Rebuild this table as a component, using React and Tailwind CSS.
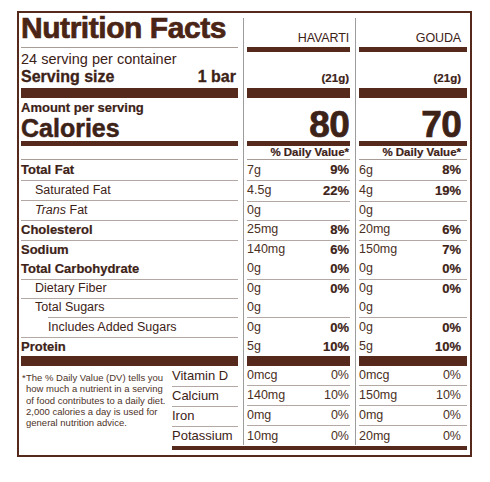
import React from "react";

const BROWN = "bg-[#55291b]";

const rows = [
  { label: "Total Fat", bold: true, pad: "pl-0", h: "h-[21px]", hv: ["7g", "9%"], gd: ["6g", "8%"], line: "ml-0" },
  { label: "Saturated Fat", pad: "pl-[14px]", h: "h-[20px]", hv: ["4.5g", "22%"], gd: ["4g", "19%"], line: "ml-0" },
  { label: "Trans", trans: true, pad: "pl-[14px]", h: "h-[19px]", hv: ["0g", ""], gd: ["0g", ""], line: "ml-0" },
  { label: "Cholesterol", bold: true, pad: "pl-0", h: "h-[20px]", hv: ["25mg", "8%"], gd: ["20mg", "6%"], line: "ml-0" },
  { label: "Sodium", bold: true, pad: "pl-0", h: "h-[19px]", hv: ["140mg", "6%"], gd: ["150mg", "7%"], line: "ml-0" },
  { label: "Total Carbohydrate", bold: true, pad: "pl-0", h: "h-[20px]", hv: ["0g", "0%"], gd: ["0g", "0%"], line: "ml-0" },
  { label: "Dietary Fiber", pad: "pl-[14px]", h: "h-[19px]", hv: ["0g", "0%"], gd: ["0g", "0%"], line: "ml-0" },
  { label: "Total Sugars", pad: "pl-[14px]", h: "h-[20px]", hv: ["0g", ""], gd: ["0g", ""], line: "ml-[27px]" },
  { label: "Includes Added Sugars", pad: "pl-[27px]", h: "h-[19px]", hv: ["0g", "0%"], gd: ["0g", "0%"], line: "ml-0" },
  { label: "Protein", bold: true, pad: "pl-0", h: "h-[19px]", hv: ["5g", "10%"], gd: ["5g", "10%"], line: null },
];

const vitamins = [
  { label: "Vitamin D", hv: ["0mcg", "0%"], gd: ["0mcg", "0%"], line: true },
  { label: "Calcium", hv: ["140mg", "10%"], gd: ["150mg", "10%"], line: true },
  { label: "Iron", hv: ["0mg", "0%"], gd: ["0mg", "0%"], line: true },
  { label: "Potassium", hv: ["10mg", "0%"], gd: ["20mg", "0%"], line: false },
];

function Line({ className = "" }) {
  return <div className={`h-px bg-[#b3a8a3] ${className}`} />;
}

function LeftColumn() {
  return (
    <div className="w-[217px] flex flex-col">
      <div className="h-[35px] border-b border-[#a99c96] text-[30px] leading-[30px] font-bold text-[#4a2516] tracking-[-0.015em] [-webkit-text-stroke:0.7px_#4a2516]">
        Nutrition Facts
      </div>
      <div className="h-[40px] pt-[3px] flex flex-col">
        <div className="text-[14.5px] leading-[17px] text-[#3d2217]">24 serving per container</div>
        <div className="flex justify-between pr-[2px] text-[16px] leading-[18px] font-bold text-[#3d2217] [-webkit-text-stroke:0.3px_#3d2217]">
          <span>Serving size</span>
          <span>1 bar</span>
        </div>
      </div>
      <div className={`h-[10px] ${BROWN}`} />
      <div className="h-[43px] pt-[2px] flex flex-col text-[#3d2217] font-bold">
        <div className="text-[13px] leading-[15px] [-webkit-text-stroke:0.2px_#3d2217]">Amount per serving</div>
        <div className="text-[25px] leading-[26px] [-webkit-text-stroke:0.5px_#3d2217]">Calories</div>
      </div>
      <div className={`h-[5px] ${BROWN}`} />
      <div className="h-[14px] border-b border-[#a99c96]" />
      {rows.map((r) => (
        <div key={r.label} className={`${r.h} flex flex-col`}>
          <div className={`flex-1 flex items-center ${r.pad} text-[#3d2217] ${r.bold ? "text-[13px] font-bold [-webkit-text-stroke:0.2px_#3d2217]" : "text-[12.5px]"}`}>
            {r.trans ? (
              <span>
                <i>Trans</i> Fat
              </span>
            ) : (
              r.label
            )}
          </div>
          {r.line && <Line className={r.line} />}
        </div>
      ))}
      <div className={`h-[10px] ${BROWN}`} />
      <div className="flex flex-1">
        <div className="w-[151px] pt-[6px] flex text-[9.5px] leading-[11.3px] text-[#4e3328] whitespace-nowrap">
          <span className="w-[5px] pl-[1px]">*</span>
          <div className="flex flex-col">
            <span>The % Daily Value (DV) tells you</span>
            <span>how much a nutrient in a serving</span>
            <span>of food contributes to a daily diet.</span>
            <span>2,000 calories a day is used for</span>
            <span>general nutrition advice.</span>
          </div>
        </div>
        <div className="w-[66px] flex flex-col">
          {vitamins.map((v) => (
            <div key={v.label} className="h-[20px] flex flex-col">
              <div className="flex-1 flex items-center text-[13px] text-[#3d2217]">{v.label}</div>
              {v.line && <Line />}
            </div>
          ))}
        </div>
      </div>
    </div>
  );
}

function ValueColumn({ name, cal, keyName, width, pr }) {
  return (
    <div className={`${width} flex flex-col text-[#3d2217]`}>
      <div className={`h-[34px] flex items-end justify-end pb-[3px] ${pr} text-[12.5px] leading-[12px] tracking-[-0.01em]`}>
        {name}
      </div>
      <div className={`h-[5px] ${BROWN}`} />
      <div className={`h-[36px] flex items-end justify-end pb-[4px] ${pr} text-[11.5px] leading-[12px] font-bold [-webkit-text-stroke:0.2px_#3d2217]`}>
        (21g)
      </div>
      <div className={`h-[10px] ${BROWN}`} />
      <div className={`h-[43px] flex items-end justify-end ${pr} text-[37px] leading-[33px] font-bold tracking-[-0.02em] [-webkit-text-stroke:0.7px_#3d2217]`}>
        {cal}
      </div>
      <div className={`h-[5px] ${BROWN}`} />
      <div className={`h-[14px] border-b border-[#a99c96] flex items-center justify-end ${pr} text-[11.5px] leading-[13px] font-bold [-webkit-text-stroke:0.2px_#3d2217]`}>
        % Daily Value*
      </div>
      {rows.map((r) => (
        <div key={r.label} className={`${r.h} flex flex-col`}>
          <div className={`flex-1 flex items-center justify-between ${pr}`}>
            <span className="text-[12.5px] text-[#4a2f24]">{r[keyName][0]}</span>
            <span className="text-[13px] font-bold [-webkit-text-stroke:0.2px_#3d2217]">{r[keyName][1]}</span>
          </div>
          {r.line && <Line />}
        </div>
      ))}
      <div className={`h-[10px] ${BROWN}`} />
      {vitamins.map((v) => (
        <div key={v.label} className="h-[20px] flex flex-col">
          <div className={`flex-1 flex items-center justify-between ${pr} text-[12.5px] text-[#4a2f24]`}>
            <span>{v[keyName][0]}</span>
            <span>{v[keyName][1]}</span>
          </div>
          {v.line && <Line />}
        </div>
      ))}
    </div>
  );
}

function Divider() {
  return <div className="w-px ml-[5px] mr-[3px] mt-[5px] mb-[1px] bg-[#9d9d9d]" />;
}

export default function App() {
  return (
    <div className="w-[490px] h-[482px] bg-white pt-[11px] pl-[17px] font-['Liberation_Sans',Arial,sans-serif]">
      <div className="w-[455px] h-[446px] border-2 border-[#55291b] pl-[2px] pr-[3px]">
        <div className="flex">
          <LeftColumn />
          <Divider />
          <ValueColumn name="HAVARTI" cal="80" keyName="hv" width="w-[103px]" pr="pr-[1px]" />
          <Divider />
          <ValueColumn name="GOUDA" cal="70" keyName="gd" width="w-[108px]" pr="pr-[6px]" />
        </div>
        <div className={`ml-[151px] w-[295px] h-[4px] ${BROWN}`} />
      </div>
    </div>
  );
}
